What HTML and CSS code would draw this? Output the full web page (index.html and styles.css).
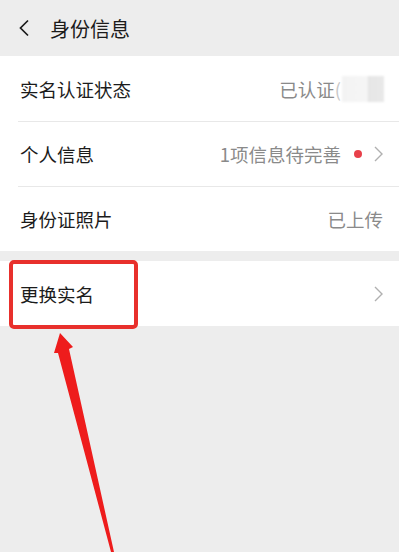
FILE: index.html
```html
<!DOCTYPE html>
<html lang="zh-CN">
<head>
<meta charset="utf-8">
<title>身份信息</title>
<link rel="stylesheet" href="styles.css">
</head>
<body>
<div class="page">
  <header class="topbar">
    <svg class="back" width="14" height="18" viewBox="0 0 14 18"><path d="M11 1.5 L3.5 9 L11 16.5" fill="none" stroke="#1b1b1b" stroke-width="1.7"/></svg>
    <span class="title">身份信息</span>
  </header>
  <section class="group">
    <div class="row">
      <span class="label">实名认证状态</span>
      <span class="value">已认证<span class="paren">(</span><span class="blur"></span></span>
    </div>
    <div class="row">
      <span class="label">个人信息</span>
      <span class="value">1项信息待完善<span class="dot"></span><svg class="chev" width="9" height="16" viewBox="0 0 9 16"><path d="M1 1 L8 8 L1 15" fill="none" stroke="#b0b0b0" stroke-width="1.4"/></svg></span>
    </div>
    <div class="row">
      <span class="label">身份证照片</span>
      <span class="value">已上传</span>
    </div>
  </section>
  <section class="group">
    <div class="row">
      <span class="label">更换实名</span>
      <span class="value"><svg class="chev" width="9" height="16" viewBox="0 0 9 16"><path d="M1 1 L8 8 L1 15" fill="none" stroke="#b0b0b0" stroke-width="1.4"/></svg></span>
    </div>
  </section>
  <div class="highlight"></div>
  <svg class="arrow" width="399" height="552" viewBox="0 0 399 552">
    <polygon points="60,333 73,347 69,349 114,552 111,552 58,353 54,353" fill="#ee1c1c"/>
  </svg>
</div>
</body>
</html>
```
FILE: styles.css
```css
* { box-sizing: border-box; }
html, body { margin: 0; padding: 0; }
body {
  background: #ededed;
  font-family: "Noto Sans CJK SC", "Noto Sans", sans-serif;
  width: 399px;
  height: 552px;
  overflow: hidden;
}
.page { position: relative; width: 399px; height: 552px; }
.topbar {
  height: 56px;
  display: flex;
  align-items: center;
  padding-left: 17px;
  gap: 19px;
}
.back { display: block; }
.title { font-size: 20px; color: #1b1b1b; }
.group { background: #fff; margin-bottom: 10px; }
.row {
  height: 65px;
  display: flex;
  align-items: center;
  justify-content: space-between;
  padding: 0 16px 0 20px;
  position: relative;
}
.row + .row::before {
  content: "";
  position: absolute;
  left: 18px; right: 0; top: 0;
  height: 1px;
  background: #e8e8e8;
}
.label { font-size: 18.5px; color: #1b1b1b; }
.value {
  font-size: 18.5px;
  color: #8a8a8a;
  display: flex;
  align-items: center;
}
.paren { color: #c8c8c8; }
.blur {
  width: 42px; height: 26px;
  background: linear-gradient(90deg, #f3f3f3 0%, #f6f6f6 60%, #e6e6e6 62%, #e9e9e9 100%);
  filter: blur(1px);
  margin-left: 1px;
  margin-right: -1px;
}
.dot {
  width: 8px; height: 8px;
  border-radius: 50%;
  background: #e8404a;
  margin: 0 12px 0 13px;
}
.chev { display: block; margin-top: 1px; }
.highlight {
  position: absolute;
  left: 9px; top: 260px;
  width: 129px; height: 69px;
  border: 4px solid #e8302c;
  border-radius: 5px;
}
.arrow { position: absolute; left: 0; top: 0; }
```
